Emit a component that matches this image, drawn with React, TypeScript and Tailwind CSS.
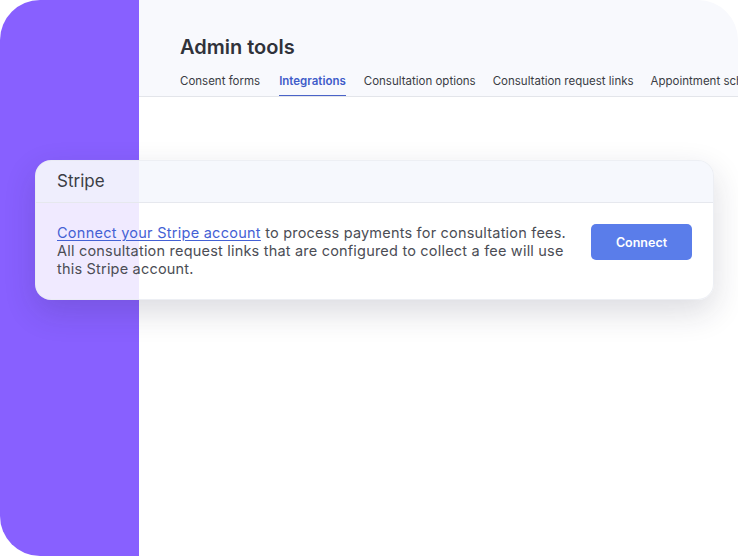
const tabs = [
  { label: 'Consent forms', active: false },
  { label: 'Integrations', active: true },
  { label: 'Consultation options', active: false },
  { label: 'Consultation request links', active: false },
  { label: 'Appointment scheduling', active: false },
];

export default function App() {
  return (
    <div className="relative flex h-[556px] w-[738px] overflow-hidden bg-white font-['Inter',sans-serif]">
      {/* Sidebar */}
      <div className="h-full w-[139px] shrink-0 rounded-l-[40px] bg-[#8860ff]" />

      {/* Main */}
      <div className="min-w-0 flex-1">
        <div className="h-[97px] overflow-hidden rounded-tr-[40px] border-b border-[#e3e5ea] bg-[#f8f9fd] pl-[41px] pt-[35px]">
          <h1 className="text-[20px] font-semibold leading-[24px] text-[#30323a]">Admin tools</h1>
          <nav className="mt-[10px] flex gap-[17px] whitespace-nowrap">
            {tabs.map((tab) => (
              <span
                key={tab.label}
                className={
                  tab.active
                    ? 'ml-[2px] mr-px h-[28px] border-b-2 border-[#4a63c8] text-[11.5px] font-semibold leading-[24px] text-[#3f5cc9]'
                    : 'h-[28px] text-[11.5px] leading-[24px] text-[#3a3c44]'
                }
              >
                {tab.label}
              </span>
            ))}
          </nav>
        </div>
      </div>

      {/* Floating card */}
      <div className="absolute left-[35px] top-[160px] h-[140px] w-[679px] overflow-hidden rounded-[16px] border border-[#e9ebf1]/80 bg-white/[0.87] shadow-[0_12px_32px_rgba(30,30,60,0.16)]">
        <div className="flex h-[42px] items-center border-b border-[#e6e8ee] bg-[#eef2fb]/50 px-[21px] text-[17px] text-[#3b3d45]">
          Stripe
        </div>
        <div className="flex items-start justify-between px-[21px] pt-[21px]">
          <p className="w-[515px] text-[14.5px] leading-[18px] tracking-[0.2px] text-[#4b4d55]">
            <a href="#" className="tracking-[0.27px] text-[#4461d4] underline underline-offset-2">
              Connect your Stripe account
            </a>{' '}
            to process payments for consultation fees. All consultation request links that are configured to collect a fee will use this Stripe account.
          </p>
          <button className="h-[36px] w-[101px] rounded-[5px] bg-[#5a7dea] pt-[2px] text-[12.5px] font-semibold text-white">
            Connect
          </button>
        </div>
      </div>
    </div>
  );
}
